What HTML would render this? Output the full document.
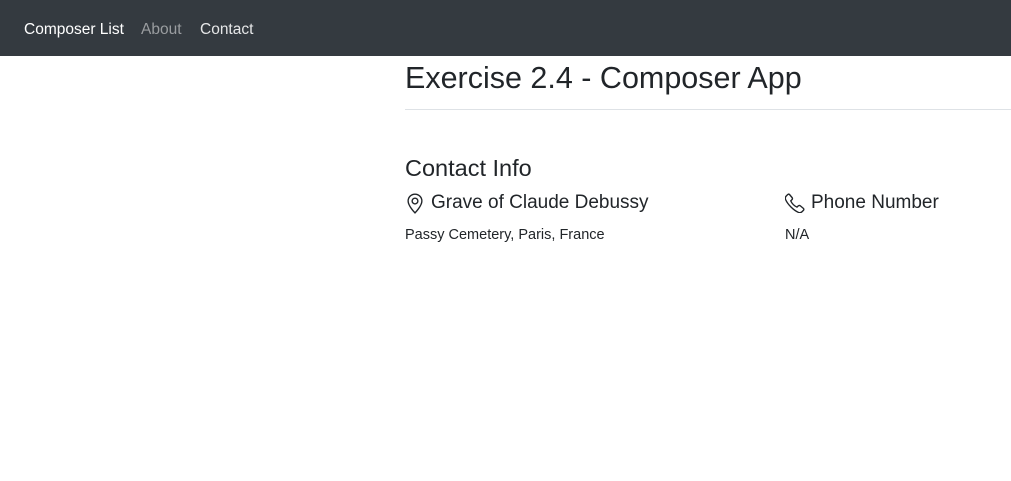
<!DOCTYPE html>
<html><head><style>
body{margin:0;font-family:"Liberation Sans",sans-serif;color:#212529;background:#fff;width:1011px;height:481px;overflow:hidden;position:relative}
.nav{height:56px;background:#343a40;position:relative}
.nav span{position:absolute;top:21px;font-size:15.5px;}
.a{position:absolute;white-space:nowrap}
</style></head><body>
<div class="nav">
<span style="left:24px;color:#fff">Composer List</span>
<span style="left:141px;color:#9a9da0">About</span>
<span style="left:200px;color:#e6e7e8">Contact</span>
</div>
<div class="a" style="left:405px;top:61px;font-size:30.5px">Exercise 2.4 - Composer App</div>
<div style="position:absolute;left:405px;right:0;top:109px;border-top:1px solid #dee2e6"></div>
<div class="a" style="left:405px;top:155px;font-size:23.5px">Contact Info</div>
<svg class="a" style="left:405px;top:193px" width="20" height="21" viewBox="0 0 16 16" fill="none" stroke="#212529" stroke-width="1.1"><path d="M8 15.5s5.5-5.5 5.5-9.5A5.5 5.5 0 0 0 2.5 6c0 4 5.5 9.5 5.5 9.5z"/><circle cx="8" cy="6" r="2.3"/></svg>
<div class="a" style="left:431px;top:192px;font-size:19px">Grave of Claude Debussy</div>
<svg class="a" style="left:785px;top:193px" width="20" height="20" viewBox="0 0 16 16" fill="none" stroke="#212529" stroke-width="1.1"><path d="M3.6 1.2 5.6 3.6c.5.6.4 1.3-.1 1.8l-.9.9c.8 2 2.9 4.2 5 5l.9-.9c.5-.5 1.2-.6 1.8-.1l2.4 2c.5.4.5 1.1 0 1.6l-1.1 1.1c-.7.7-1.9.9-2.9.5C6.800 13.800 2.200 9.200.5 5.300c-.4-1-.2-2.200.5-2.900L2.100 1.300c.5-.5 1.100-.5 1.500-.1z"/></svg>
<div class="a" style="left:811px;top:192px;font-size:19px">Phone Number</div>
<div class="a" style="left:405px;top:227px;font-size:14.5px">Passy Cemetery, Paris, France</div>
<div class="a" style="left:785px;top:227px;font-size:14.5px">N/A</div>
</body></html>
